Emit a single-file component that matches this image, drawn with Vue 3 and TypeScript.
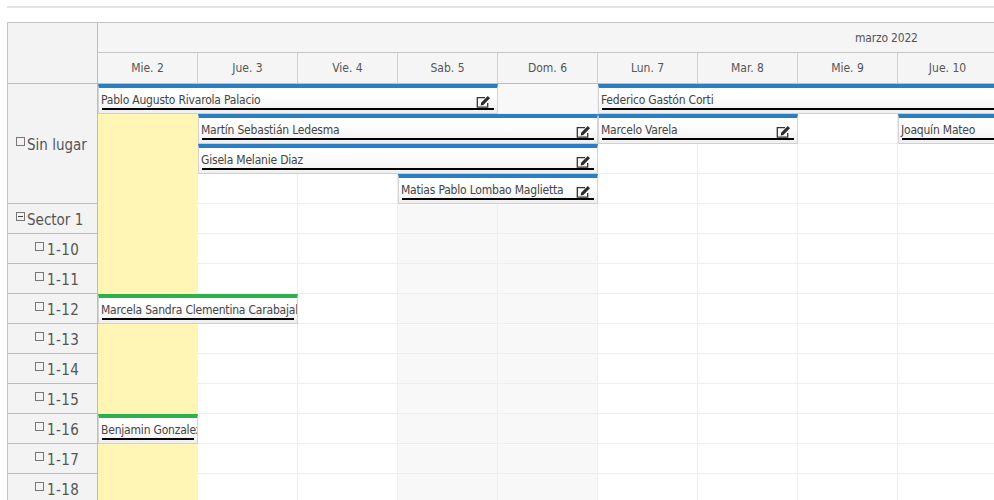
<script setup lang="ts">
interface Ev { name: string; col: number; span: number; row: number; color: string; icon: boolean }
const days = ['Mie. 2','Jue. 3','Vie. 4','Sab. 5','Dom. 6','Lun. 7','Mar. 8','Mie. 9','Jue. 10','Vie. 11']
const rows = [
  { label: 'Sin lugar', level: 0, minus: false, span: 4 },
  { label: 'Sector 1', level: 0, minus: true, span: 1 },
  ...['1-10','1-11','1-12','1-13','1-14','1-15','1-16','1-17','1-18'].map(l => ({ label: l, level: 1, minus: false, span: 1 })),
]
const totalRows = 14
const cells: { key: string; cls: string }[] = []
for (let r = 0; r < totalRows; r++) {
  for (let c = 0; c < days.length; c++) {
    const weekend = c === 3 || c === 4
    cells.push({ key: `${r}-${c}`, cls: c === 0 ? 'yellow' : weekend ? 'weekend' : '' })
  }
}
const blue = '#2a7fc2'
const green = '#2cb14b'
const events: Ev[] = [
  { name: 'Pablo Augusto Rivarola Palacio', col: 1, span: 4, row: 1, color: blue, icon: true },
  { name: 'Federico Gastón Corti', col: 6, span: 5, row: 1, color: blue, icon: false },
  { name: 'Martín Sebastián Ledesma', col: 2, span: 4, row: 2, color: blue, icon: true },
  { name: 'Marcelo Varela', col: 6, span: 2, row: 2, color: blue, icon: true },
  { name: 'Joaquín Mateo', col: 9, span: 2, row: 2, color: blue, icon: false },
  { name: 'Gisela Melanie Diaz', col: 2, span: 4, row: 3, color: blue, icon: true },
  { name: 'Matias Pablo Lombao Maglietta', col: 4, span: 2, row: 4, color: blue, icon: true },
  { name: 'Marcela Sandra Clementina Carabajal', col: 1, span: 2, row: 8, color: green, icon: false },
  { name: 'Benjamin Gonzalez', col: 1, span: 1, row: 12, color: green, icon: false },
]
</script>

<template>
  <div class="page">
    <div class="rule"></div>
    <div class="scheduler">
      <div class="left">
        <div class="corner"></div>
        <div v-for="r in rows" :key="r.label" class="row-label" :class="{ tall: r.span > 1, sub: r.level === 1 }">
          <span class="box" :class="{ minus: r.minus }"></span>
          <span class="row-text">{{ r.label }}</span>
        </div>
      </div>
      <div class="right">
        <div class="month"><span class="month-text">marzo 2022</span></div>
        <div class="days">
          <div v-for="d in days" :key="d" class="day">{{ d }}</div>
        </div>
        <div class="body">
          <div class="grid">
            <div v-for="c in cells" :key="c.key" class="cell" :class="c.cls"></div>
          </div>
          <div class="grid events">
            <div
              v-for="e in events"
              :key="e.name"
              class="event"
              :style="{ gridColumn: `${e.col} / span ${e.span}`, gridRow: e.row, borderTopColor: e.color }"
            >
              <span class="event-name">{{ e.name }}</span>
              <svg v-if="e.icon" class="edit" viewBox="0 0 15 15" width="15" height="15">
                <path d="M9 2.600H1.300v9.600h10.400V8" fill="none" stroke="#333" stroke-width="1.300" />
                <path d="M4.800 10.500L5.100 7.700L11.800 1L14 3.200L7.300 10Z" fill="#2b2b2b" />
              </svg>
            </div>
          </div>
        </div>
      </div>
    </div>
  </div>
</template>

<style>
html, body { margin: 0; overflow: hidden; background: #fff; }
</style>

<style scoped>
.page {
  width: 994px;
  height: 500px;
  overflow: hidden;
  padding: 6px 0 0 7px;
  box-sizing: border-box;
  font-family: "DejaVu Sans Condensed", "DejaVu Sans", sans-serif;
  color: #555;
}
.rule { height: 2px; background: #e4e4e4; margin-bottom: 14px; width: 987px; }
.scheduler {
  display: flex;
  width: max-content;
  border: 1px solid #c4c4c4;
  border-bottom: 0;
}
.left { width: 89px; flex: none; border-right: 1px solid #bdbdbd; background: #f3f3f3; }
.corner { height: 60px; border-bottom: 1px solid #bdbdbd; }
.row-label {
  height: 30px;
  box-sizing: border-box;
  border-bottom: 1px solid #bdbdbd;
  display: flex;
  align-items: center;
  padding: 2px 0 0 8px;
  font-size: 15px;
  color: #555;
}
.row-label.tall { height: 120px; }
.row-label.sub { padding-left: 27px; letter-spacing: 0.4px; }
.row-label.sub .box { margin-right: 3px; }
.box {
  width: 7px;
  height: 7px;
  border: 1px solid #777;
  margin-right: 2px;
  margin-top: -7px;
  position: relative;
  flex: none;
}
.box.minus::after {
  content: "";
  position: absolute;
  left: 1px;
  right: 1px;
  top: 3px;
  height: 1px;
  background: #444;
}
.row-text { white-space: nowrap; }
.right { flex: none; }
.month {
  height: 29px;
  background: #f5f5f5;
  border-bottom: 1px solid #c8c8c8;
  display: flex;
  align-items: center;
  font-size: 12px;
  letter-spacing: -0.2px;
  color: #555;
}
.month-text { margin-left: 757px; }
.days { display: flex; height: 30px; background: #f5f5f5; border-bottom: 1px solid #bdbdbd; }
.day {
  width: 100px;
  box-sizing: border-box;
  border-right: 1px solid #cfcfcf;
  display: flex;
  align-items: center;
  justify-content: center;
  font-size: 12px;
  color: #555;
}
.body { display: grid; }
.grid {
  grid-area: 1 / 1;
  display: grid;
  grid-template-columns: repeat(10, 100px);
  grid-auto-rows: 30px;
}
.cell { box-sizing: border-box; border-right: 1px solid #eee; border-bottom: 1px solid #eee; }
.cell.yellow { background: #fff6b5; border-color: #fff6b5; }
.cell.weekend { background: #f8f8f8; }
.event {
  box-sizing: border-box;
  border-top: 4px solid;
  border-left: 1px solid #d4d4d4;
  border-right: 1px solid #d4d4d4;
  border-bottom: 1px solid #cfcfcf;
  background: linear-gradient(#fff 30%, #efefef);
  position: relative;
  padding: 4px 2px 0 2px;
  overflow: hidden;
  font-size: 12px;
  letter-spacing: -0.2px;
  line-height: 16px;
  color: #444;
  white-space: nowrap;
}
.event::after {
  content: "";
  position: absolute;
  left: 3px;
  right: 3px;
  bottom: 3px;
  height: 2px;
  background: #000;
}
.edit { position: absolute; right: 6px; top: 7px; }
</style>
